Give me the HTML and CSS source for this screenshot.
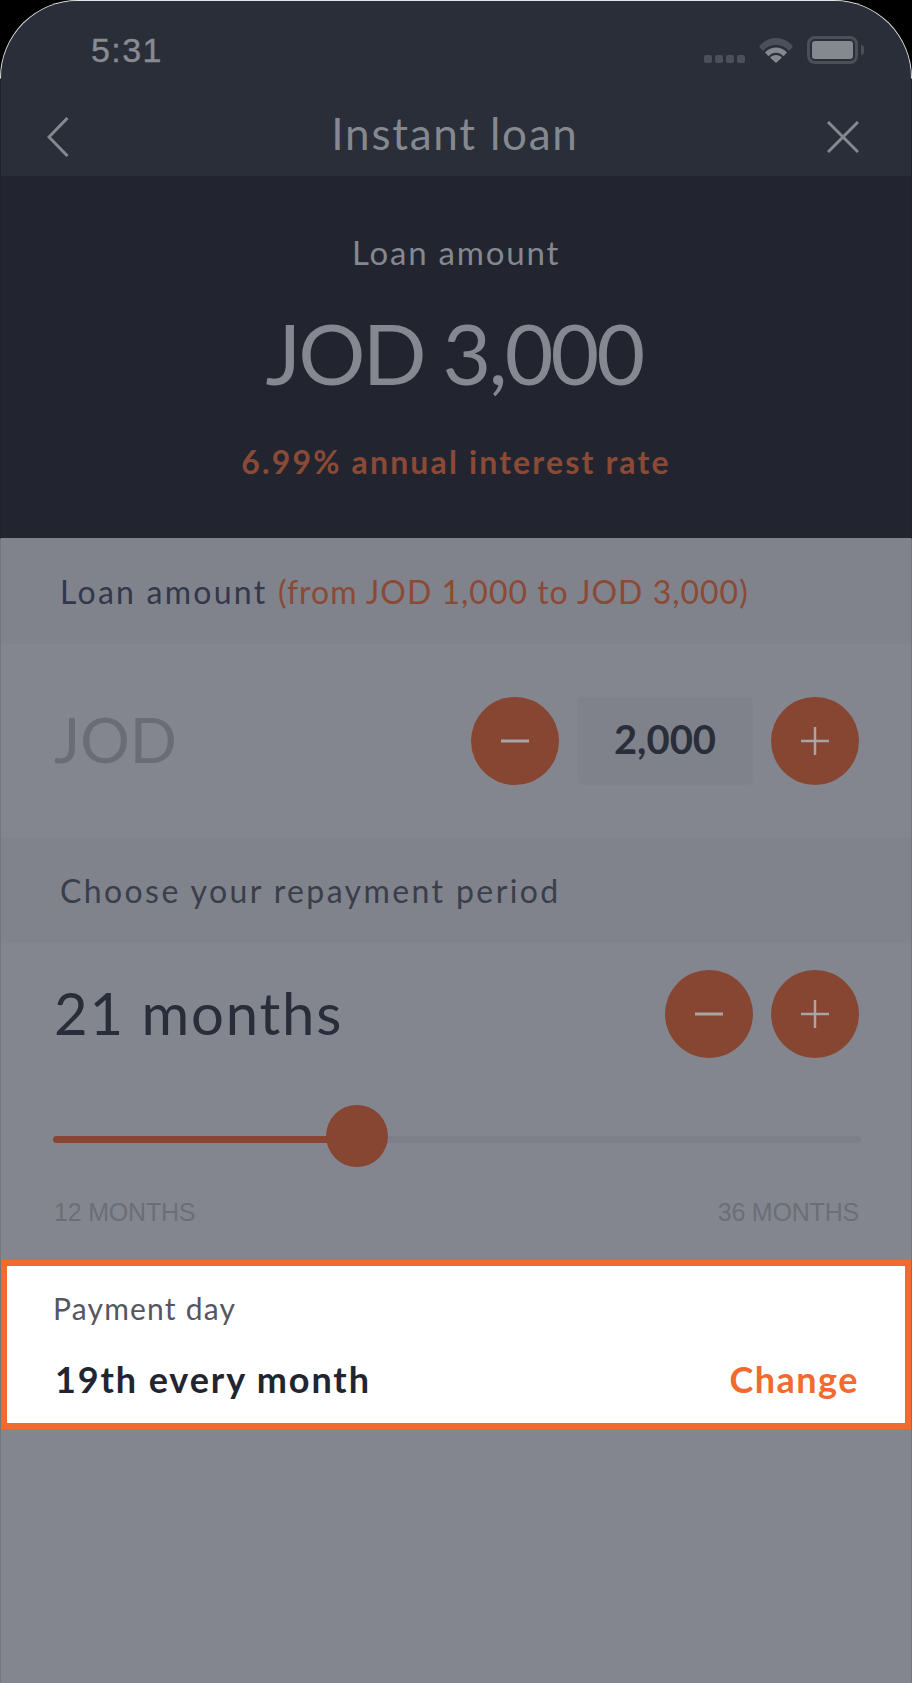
FILE: index.html
```html
<!DOCTYPE html>
<html lang="en">
<head>
<meta charset="utf-8">
<title>Instant loan</title>
<link rel="stylesheet" href="styles.css">
</head>
<body>
<div class="bezel">
<main class="phone">
  <header class="top">
    <div class="status">
      <span class="time">5:31</span>
      <div class="status-icons">
        <span class="dots"><i></i><i></i><i></i><i></i></span>
        <svg class="wifi" width="34" height="26" viewBox="0 0 34 26">
          <path d="M0 9.5C9.5 -1.8 24.5 -1.8 34 9.5L30 14C22.5 5.5 11.5 5.5 4 14Z" fill="#4b4f59"/>
          <path d="M6 15.5C12 8.8 22 8.8 28 15.5L24.5 19.2C20 14.6 14 14.6 9.5 19.2Z" fill="#85888f"/>
          <path d="M11 20.5C14.5 17.2 19.5 17.2 23 20.5L17 26Z" fill="#85888f"/>
        </svg>
        <span class="battery"><span class="battery-fill"></span></span>
        <span class="battery-nub"></span>
      </div>
    </div>
    <nav class="nav">
      <svg class="back" width="22" height="40" viewBox="0 0 22 40"><path d="M20.5 1L2 20L20.5 39" fill="none" stroke="#85888f" stroke-width="3"/></svg>
      <h1 class="title">Instant loan</h1>
      <svg class="close" width="32" height="32" viewBox="0 0 32 32"><path d="M1 1L31 31M31 1L1 31" fill="none" stroke="#85888f" stroke-width="3"/></svg>
    </nav>
  </header>

  <section class="hero">
    <p class="hero-label">Loan amount</p>
    <p class="hero-amount">JOD 3,000</p>
    <p class="hero-rate">6.99% annual interest rate</p>
  </section>

  <h2 class="band band-first"><span class="band-lead">Loan amount </span><span class="accent">(from JOD 1,000 to JOD 3,000)</span></h2>

  <section class="amount-row">
    <span class="currency">JOD</span>
    <div class="stepper">
      <button class="round" type="button"><svg width="28" height="28" viewBox="0 0 28 28"><path d="M0 14H28" stroke="#a9a4a5" stroke-width="3"/></svg></button>
      <span class="value">2,000</span>
      <button class="round" type="button"><svg width="28" height="28" viewBox="0 0 28 28"><path d="M0 14H28M14 0V28" stroke="#a9a4a5" stroke-width="2.5"/></svg></button>
    </div>
  </section>

  <h2 class="band band-second">Choose your repayment period</h2>

  <section class="period">
    <div class="period-row">
      <span class="months">21 months</span>
      <div class="stepper">
        <button class="round" type="button"><svg width="28" height="28" viewBox="0 0 28 28"><path d="M0 14H28" stroke="#a9a4a5" stroke-width="3"/></svg></button>
        <button class="round" type="button"><svg width="28" height="28" viewBox="0 0 28 28"><path d="M0 14H28M14 0V28" stroke="#a9a4a5" stroke-width="2.5"/></svg></button>
      </div>
    </div>
    <div class="slider">
      <div class="track"><div class="track-fill"></div></div>
      <span class="thumb"></span>
    </div>
    <div class="limits"><span>12 MONTHS</span><span>36 MONTHS</span></div>
  </section>

  <section class="payment">
    <p class="payment-label">Payment day</p>
    <div class="payment-row">
      <span class="payment-value">19th every month</span>
      <a class="change">Change</a>
    </div>
  </section>
</main>
</div>
</body>
</html>
```

FILE: styles.css
```css
* { box-sizing: border-box; }
html, body { margin: 0; padding: 0; background: #000; }
body { width: 912px; height: 1683px; overflow: hidden; font-family: "Lato", "Liberation Sans", sans-serif; }
h1, h2, p { margin: 0; font-weight: 400; }

.bezel {
  width: 912px; height: 1683px;
  padding: 1px 1px 0;
  border-radius: 78px 78px 0 0;
  background: linear-gradient(#e4e4e8 0, #e4e4e8 78px, #20222a 79px, #20222a 538px, #74767e 539px);
}
.phone {
  height: 100%;
  display: flex; flex-direction: column;
  background: #84868f;
  border-radius: 77px 77px 0 0;
  overflow: hidden;
}

.top { height: 175px; background: #292e38; flex: none; }
.status { height: 100px; padding: 34px 47px 0 90px; display: flex; justify-content: space-between; }
.time { font: 400 34px/30px "Liberation Sans", sans-serif; color: #898b93; letter-spacing: 1.4px; -webkit-text-stroke: .4px #898b93; }
.status-icons { display: flex; align-items: flex-start; }
.dots { display: flex; gap: 3px; margin-top: 20px; margin-right: 14px; }
.dots i { width: 8px; height: 8px; border-radius: 2px; background: #4b4f59; }
.wifi { margin-top: 2px; margin-right: 14px; }
.battery { width: 51px; height: 28px; margin-top: 1px; border: 3px solid #4b4f59; border-radius: 8px; padding: 2px; }
.battery-fill { display: block; height: 100%; background: #85888f; border-radius: 3px; }
.battery-nub { width: 3px; height: 10px; margin: 10px 0 0 3px; background: #4b4f59; border-radius: 0 3px 3px 0; }

.nav { height: 75px; padding: 0 52px 0 46px; display: flex; align-items: center; }
.back { margin-top: -3px; }
.close { margin-top: -3px; }
.title { flex: 1; text-align: center; padding-left: 14px; font-size: 44px; line-height: 50px; color: #85888f; margin-top: -12px; letter-spacing: 1.75px; }

.hero { height: 362px; background: #222530; flex: none; display: flex; flex-direction: column; align-items: center; }
.hero-label { margin-top: 56px; font-size: 33px; line-height: 40px; color: #85888f; letter-spacing: 1.8px; }
.hero-amount { margin-top: 31px; padding-right: 4px; font-size: 84px; line-height: 100px; color: #858791; letter-spacing: -2.8px; }
.hero-rate { margin-top: 39px; font-size: 32px; line-height: 40px; color: #8b4a35; font-weight: 700; letter-spacing: 2.15px; }

.band { flex: none; height: 105px; display: flex; align-items: center; padding-left: 59px; background: #80838c; font-size: 32px; color: #33374a; letter-spacing: 1.35px; white-space: pre; }
.band-first { height: 106px; }
.band-lead { letter-spacing: 2.25px; }
.band-second { color: #3a3e4b; letter-spacing: 2.4px; }
.accent { color: #8b4a35; letter-spacing: 1px; }

.amount-row { flex: none; height: 194px; padding: 0 52px 0 53px; display: flex; align-items: center; justify-content: space-between; }
.currency { font-size: 62px; color: #6a6d76; margin-top: -4px; }
.stepper { display: flex; align-items: center; gap: 18px; }
.round { width: 88px; height: 88px; padding: 0; border: 0; border-radius: 50%; background: #874632; display: flex; align-items: center; justify-content: center; }
.value { width: 176px; height: 88px; border-radius: 6px; background: #7f828b; display: flex; align-items: center; justify-content: center; font-size: 40px; font-weight: 700; color: #2a2e3b; padding-bottom: 4px; }

.period { flex: none; height: 318px; padding: 27px 52px 0 53px; }
.period-row { display: flex; align-items: center; justify-content: space-between; height: 88px; }
.months { font-size: 58px; color: #292d3a; letter-spacing: 1.8px; margin-top: -4px; }
.slider { position: relative; height: 62px; margin-top: 47px; display: flex; align-items: center; }
.track { width: calc(100% + 3px); height: 7px; margin: 7px -2px 0 -1px; border-radius: 4px; background: #7d808a; flex: none; }
.track-fill { width: 276px; height: 100%; border-radius: 4px 0 0 4px; background: #874632; }
.thumb { position: absolute; left: 272px; top: 0; width: 62px; height: 62px; border-radius: 50%; background: #874632; }
.limits { display: flex; justify-content: space-between; margin-top: 30px; font: 400 25px/30px "Liberation Sans", sans-serif; color: #6b6e78; letter-spacing: -.2px; }

.payment { flex: none; height: 169px; background: #fff; border: 6px solid #f26a2e; padding: 24px 46px 0 46px; margin-top: -1px; }
.payment-label { font-size: 30px; line-height: 36px; color: #55575f; letter-spacing: 1.2px; }
.payment-row { display: flex; justify-content: space-between; align-items: center; margin-top: 31px; height: 44px; }
.payment-value { font-size: 36px; font-weight: 700; color: #222530; letter-spacing: 1.9px; margin-left: 2px; }
.change { font-size: 36px; font-weight: 700; color: #f26a2e; letter-spacing: 1.5px; }
```
